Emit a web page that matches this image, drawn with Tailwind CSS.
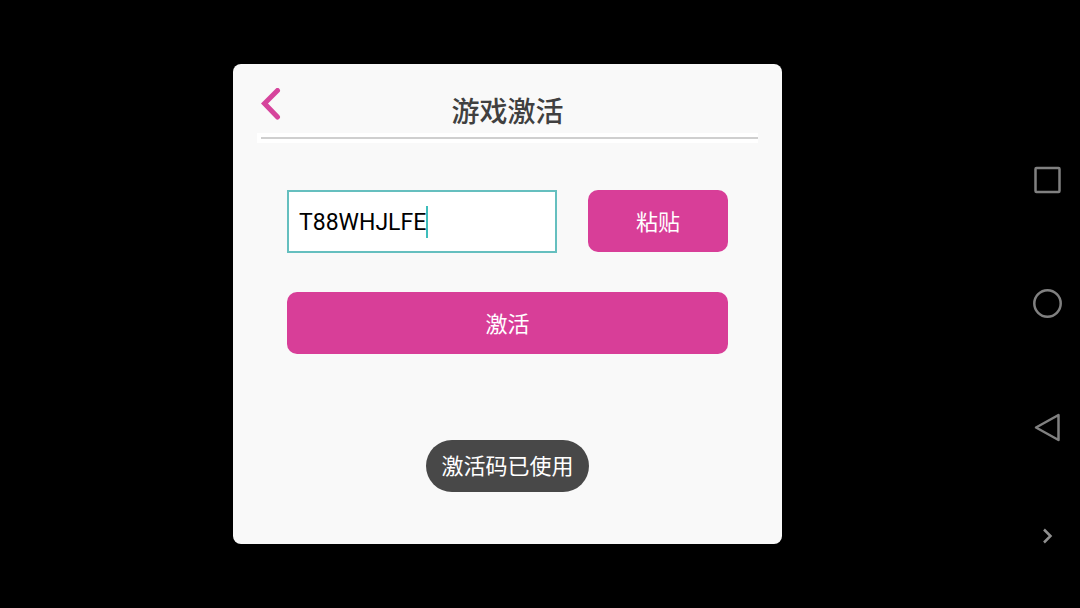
<!DOCTYPE html>
<html lang="zh-CN">
<head>
    <meta charset="UTF-8">
    <meta name="viewport" content="width=device-width, initial-scale=1.0">
    <title>游戏激活</title>
    <script src="https://cdn.jsdelivr.net/npm/@tailwindcss/browser@4"></script>
</head>
<body class="flex min-h-screen bg-black font-[Roboto,'Noto_Sans_CJK_SC',sans-serif]">
    <main class="flex flex-1 items-center justify-center">
        <div class="w-full max-w-[549px] rounded-lg bg-[#f9f9f9] pt-6 pb-[52px]">
            <header class="mx-6 grid grid-cols-[1fr_auto_1fr]">
                <button type="button" aria-label="返回" class="h-8 w-6 cursor-pointer pl-1">
                    <svg class="h-8 w-5" viewBox="0 0 20 32" fill="none" stroke="#d6449c" stroke-width="5" stroke-linecap="round">
                        <path d="M16.500 2.500 3.500 15.500 16.500 29"/>
                    </svg>
                </button>
                <h1 class="pt-1 text-[28px] leading-[41px] font-medium text-[#404040]">游戏激活</h1>
            </header>
            <div class="mx-6 bg-white py-1 pl-1">
                <div class="h-[2px] bg-[#cfcfcf]"></div>
            </div>

            <form id="activateForm" class="mt-[47px] px-[54px]">
                <div class="flex items-start gap-[31px]">
                    <div class="relative min-w-0 flex-1">
                        <input type="text" id="code" name="code" aria-label="激活码" value="T88WHJLFE" autocomplete="off"
                               class="block h-[63px] w-full border-2 border-[#65bfbf] bg-white px-[10px] pt-[2px] text-[23px] text-black caret-[#1fb5b0] outline-none">
                        <span id="caret" class="pointer-events-none absolute top-4 left-[139px] h-8 w-[2px] bg-[#3dbdbb]"></span>
                    </div>
                    <button type="button" id="pasteBtn" class="h-[62px] w-[140px] cursor-pointer rounded-[10px] bg-[#d83e98] pt-[2px] text-[22px] text-white">粘贴</button>
                </div>
                <button type="submit" class="mt-[39px] h-[62px] w-full cursor-pointer rounded-[10px] bg-[#d83e98] pt-[2px] text-[22px] text-white">激活</button>
            </form>

            <div class="mt-[86px] flex justify-center">
                <p role="status" class="rounded-full bg-[#484848] px-[15px] pt-[2px] text-[22px] leading-[50px] text-white">激活码已使用</p>
            </div>
        </div>
    </main>

    <!-- system navigation -->
    <nav class="flex w-[65px] flex-col items-center pt-[164px]">
        <button type="button" aria-label="最近任务" class="size-8 cursor-pointer">
            <svg class="size-8" viewBox="0 0 32 32" fill="none" stroke="#808080" stroke-width="2.5">
                <rect x="3.500" y="4" width="24" height="24" rx="1"/>
            </svg>
        </button>
        <button type="button" aria-label="主页" class="mt-[92px] size-8 cursor-pointer">
            <svg class="size-8" viewBox="0 0 32 32" fill="none" stroke="#808080" stroke-width="2.5">
                <circle cx="15.500" cy="15.500" r="13.2"/>
            </svg>
        </button>
        <button type="button" aria-label="后退" class="mt-[92px] size-8 cursor-pointer">
            <svg class="size-8" viewBox="0 0 32 32" fill="none" stroke="#808080" stroke-width="2.5" stroke-linejoin="round">
                <path d="M26.500 3v25L4 15.500z"/>
            </svg>
        </button>
        <button type="button" aria-label="隐藏导航栏" class="mt-[76px] size-8 cursor-pointer">
            <svg class="size-8" viewBox="0 0 32 32" fill="none" stroke="#909090" stroke-width="2.5">
                <path d="M12 9.500 18.500 16 12 22.500"/>
            </svg>
        </button>
    </nav>

    <script>
        const code = document.getElementById('code');
        const caret = document.getElementById('caret');

        code.addEventListener('focus', () => {
            caret.hidden = true;
        });

        document.getElementById('pasteBtn').addEventListener('click', async () => {
            code.focus();
            code.value = await navigator.clipboard.readText();
        });

        document.getElementById('activateForm').addEventListener('submit', (event) => {
            event.preventDefault();
        });
    </script>
</body>
</html>
